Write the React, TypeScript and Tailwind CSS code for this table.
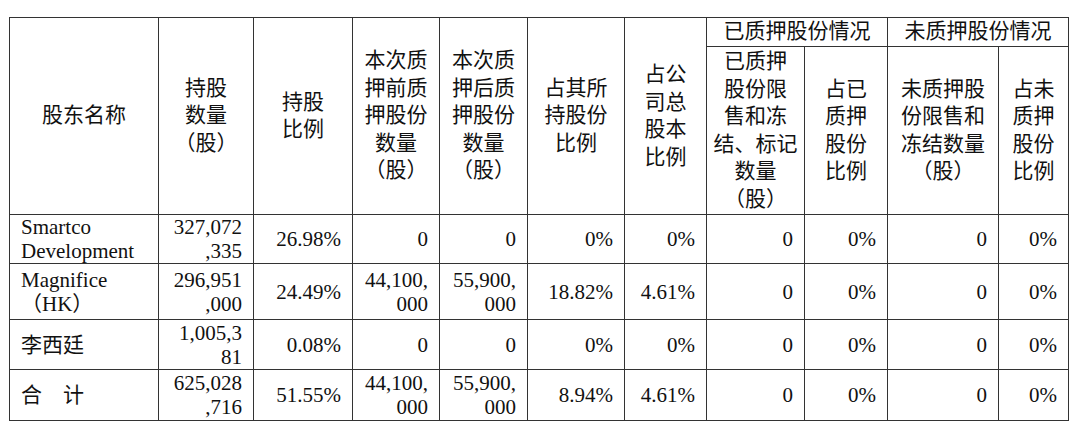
const rows = [
  {
    name: ["Smartco", "Development"],
    shares: ["327,072", ",335"],
    ratio: "26.98%",
    before: ["0"],
    after: ["0"],
    ownPct: "0%",
    totalPct: "0%",
    h: "h-[48px]",
  },
  {
    name: ["Magnifice", "（HK）"],
    shares: ["296,951", ",000"],
    ratio: "24.49%",
    before: ["44,100,", "000"],
    after: ["55,900,", "000"],
    ownPct: "18.82%",
    totalPct: "4.61%",
    h: "h-[56px]",
  },
  {
    name: ["李西廷"],
    shares: ["1,005,3", "81"],
    ratio: "0.08%",
    before: ["0"],
    after: ["0"],
    ownPct: "0%",
    totalPct: "0%",
    h: "h-[50px]",
  },
  {
    name: ["合　计"],
    shares: ["625,028", ",716"],
    ratio: "51.55%",
    before: ["44,100,", "000"],
    after: ["55,900,", "000"],
    ownPct: "8.94%",
    totalPct: "4.61%",
    h: "h-[51px]",
  },
];

const Lines = ({ lines }: { lines: string[] }) => (
  <>
    {lines.map((l, i) => (
      <div key={i}>{l}</div>
    ))}
  </>
);

const th = "border border-[#333] text-center align-middle font-normal leading-[27.5px] px-0";
const td = "border border-[#333] text-right align-middle px-[11px] py-0 leading-[24px] whitespace-nowrap";

const App = () => {
  return (
    <div className="w-[1080px] h-[430px] bg-white pl-[9px] pt-[17px] text-[21px] text-[#111] font-['Liberation_Serif','Noto_Sans_CJK_SC',serif]">
      <table className="table-fixed border-collapse w-[1060px]">
        <colgroup>
          <col className="w-[149px]" />
          <col className="w-[95px]" />
          <col className="w-[99px]" />
          <col className="w-[87px]" />
          <col className="w-[88px]" />
          <col className="w-[97px]" />
          <col className="w-[82px]" />
          <col className="w-[98px]" />
          <col className="w-[83px]" />
          <col className="w-[111px]" />
          <col className="w-[70px]" />
        </colgroup>
        <thead>
          <tr className="h-[29px]">
            <th rowSpan={2} className={th}>股东名称</th>
            <th rowSpan={2} className={th}>
              <Lines lines={["持股", "数量", "（股）"]} />
            </th>
            <th rowSpan={2} className={th}>
              <Lines lines={["持股", "比例"]} />
            </th>
            <th rowSpan={2} className={th}>
              <Lines lines={["本次质", "押前质", "押股份", "数量", "（股）"]} />
            </th>
            <th rowSpan={2} className={th}>
              <Lines lines={["本次质", "押后质", "押股份", "数量", "（股）"]} />
            </th>
            <th rowSpan={2} className={th}>
              <Lines lines={["占其所", "持股份", "比例"]} />
            </th>
            <th rowSpan={2} className={th}>
              <Lines lines={["占公", "司总", "股本", "比例"]} />
            </th>
            <th colSpan={2} className={th}>已质押股份情况</th>
            <th colSpan={2} className={th}>未质押股份情况</th>
          </tr>
          <tr className="h-[168px]">
            <th className={th}>
              <Lines lines={["已质押", "股份限", "售和冻", "结、标记", "数量", "（股）"]} />
            </th>
            <th className={th}>
              <Lines lines={["占已", "质押", "股份", "比例"]} />
            </th>
            <th className={th}>
              <Lines lines={["未质押股", "份限售和", "冻结数量", "（股）"]} />
            </th>
            <th className={th}>
              <Lines lines={["占未", "质押", "股份", "比例"]} />
            </th>
          </tr>
        </thead>
        <tbody>
          {rows.map((r) => (
            <tr key={r.name.join("")} className={r.h}>
              <td className="border border-[#333] text-left align-middle pl-[11px] pr-0 py-0 leading-[24px] whitespace-nowrap">
                <Lines lines={r.name} />
              </td>
              <td className={td}>
                <Lines lines={r.shares} />
              </td>
              <td className={td}>{r.ratio}</td>
              <td className={td}>
                <Lines lines={r.before} />
              </td>
              <td className={td}>
                <Lines lines={r.after} />
              </td>
              <td className={td}>{r.ownPct}</td>
              <td className={td}>{r.totalPct}</td>
              <td className={td}>0</td>
              <td className={td}>0%</td>
              <td className={td}>0</td>
              <td className={td}>0%</td>
            </tr>
          ))}
        </tbody>
      </table>
    </div>
  );
};

export default App;
